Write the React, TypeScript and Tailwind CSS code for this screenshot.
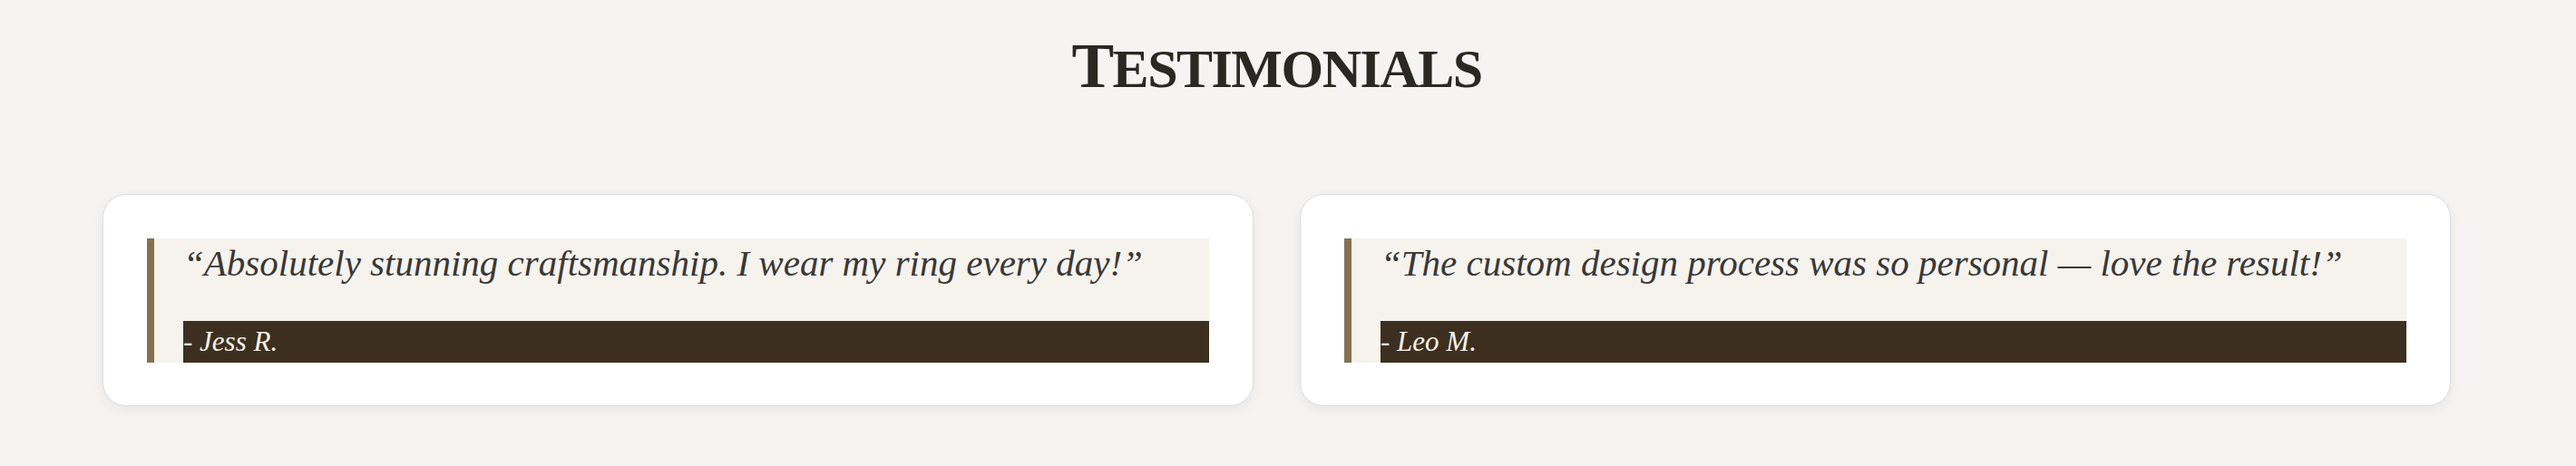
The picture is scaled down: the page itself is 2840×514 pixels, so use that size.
import React from 'react';

type Testimonial = {
  quote: string;
  author: string;
};

const testimonials: Testimonial[] = [
  {
    quote: '“Absolutely stunning craftsmanship. I wear my ring every day!”',
    author: '- Jess R.'
  },
  {
    quote: '“The custom design process was so personal — love the result!”',
    author: '- Leo M.'
  }
];

const TestimonialCard: React.FC<{ item: Testimonial }> = ({ item }) => (
  <div className="bg-white border border-[#dadee6] rounded-[26px] shadow-[0_4px_14px_rgba(0,0,0,0.06)] px-12 pt-12 pb-[47px]">
    <blockquote className="bg-[#f6f3ed] border-l-8 border-[#86714f] pl-8">
      <p className="text-[41px] leading-[54px] italic text-[#383838] mb-[37px] whitespace-nowrap">
        {item.quote}
      </p>
      <footer className="bg-[#3c2f1f] text-[#f7f2e8] text-[31px] leading-[46px] italic h-[46px]">
        {item.author}
      </footer>
    </blockquote>
  </div>
);

export default function App() {
  return (
    <main className="min-h-[514px] bg-[#f5f4f2] font-['Liberation_Serif',_'Times_New_Roman',_serif] pt-[38px] pr-[25px]">
      <div className="w-[2589px] mx-auto">
        <h2 className="h-[80px] text-center text-[70px] leading-[70px] font-bold text-[#2a2822] tracking-[-1.5px]">
          T<span className="uppercase text-[60px]">estimonials</span>
        </h2>
        <div className="grid grid-cols-2 gap-[51px] mt-[96px]">
          {testimonials.map((t) => (
            <TestimonialCard key={t.author} item={t} />
          ))}
        </div>
      </div>
    </main>
  );
}
